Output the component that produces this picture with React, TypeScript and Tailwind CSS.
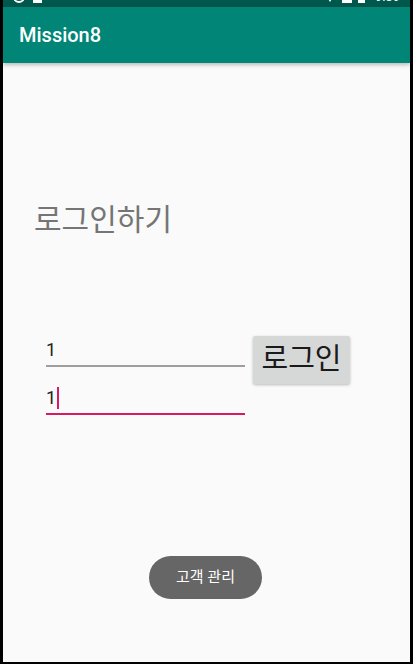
export default function App() {
  return (
    <div className="flex h-[664px] w-[413px] bg-black pb-[2px] pl-[3px] pr-[3px] font-['Roboto','Noto_Sans_CJK_KR',sans-serif]">
      <div className="flex flex-1 flex-col bg-[#fafafa]">
        {/* status bar, cut off at the top */}
        <div className="h-[7px] overflow-hidden bg-[#00574b]">
          <div className="-mt-[13px] flex h-[20px] items-center justify-between px-[10px] text-[13px] text-white">
            <div className="flex items-center gap-[8px]">
              <span className="h-[12px] w-[12px] rounded-full border-[2px] border-white" />
              <span className="h-[12px] w-[9px] bg-white" />
            </div>
            <div className="flex items-center gap-[6px]">
              <span className="h-0 w-0 border-x-[6px] border-t-[10px] border-x-transparent border-t-white" />
              <span className="h-[12px] w-[10px] bg-white" />
              <span className="h-[12px] w-[7px] bg-white" />
              <span className="ml-[4px] leading-[20px]">9:39</span>
            </div>
          </div>
        </div>

        {/* app bar */}
        <div className="relative flex h-[56px] items-center bg-[#008577] pl-[16px] shadow-[0_2px_4px_rgba(0,0,0,0.25)]">
          <span className="text-[20px] font-medium text-white">Mission8</span>
        </div>

        <div className="flex flex-1 flex-col">
          <div className="mt-[139px] pl-[31px] text-[30px] leading-[36px] text-[#757575]">
            로그인하기
          </div>

          <div className="mt-[95px] flex items-start pl-[43px]">
            <div className="flex w-[199px] flex-col">
              <div className="flex h-[34px] items-end border-b-[2px] border-[#9e9e9e] pb-[4px] text-[18px] leading-[22px] text-[#212121]">
                1
              </div>
              <div className="mt-[12px] flex h-[36px] items-end border-b-[2px] border-[#d81b60] pb-[4px] text-[18px] leading-[22px] text-[#212121]">
                1<span className="ml-[1px] h-[22px] w-[2px] bg-[#d81b60]" />
              </div>
            </div>
            <div className="ml-[8px] mt-[3px] flex h-[48px] w-[97px] items-center justify-center rounded-[2px] bg-[#d6d7d7] text-[29px] text-[#1a1a1a] shadow-[0_1px_3px_rgba(0,0,0,0.25)]">
              로그인
            </div>
          </div>

          <div className="mt-[141px] flex justify-center pr-[2px]">
            <div className="flex h-[43px] w-[113px] items-center justify-center rounded-full bg-[#666666] text-[15px] text-white">
              고객 관리
            </div>
          </div>
        </div>
      </div>
    </div>
  );
}
